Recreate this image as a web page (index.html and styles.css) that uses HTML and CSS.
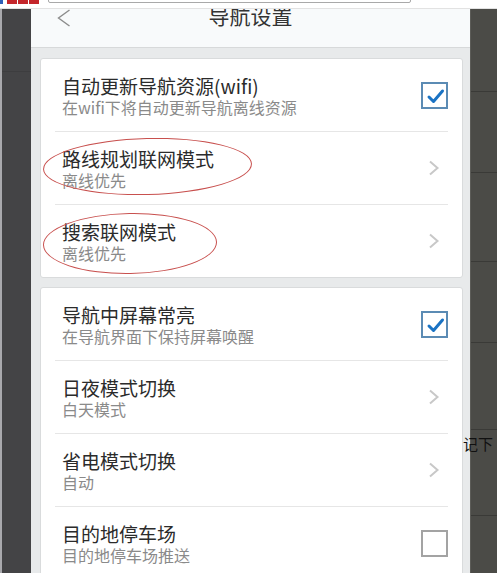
FILE: index.html
```html
<!DOCTYPE html>
<html lang="zh-CN">
<head>
<meta charset="utf-8">
<title>导航设置</title>
<link rel="stylesheet" href="styles.css">
</head>
<body>
<div class="screen">
  <div class="strip-left">
    <div class="lband"></div>
  </div>
  <div class="phone">
    <header class="nav">
      <div class="nav-back">
        <svg width="14" height="18" viewBox="0 0 14 18"><polyline points="12.5,1 1.5,9 12.5,17" fill="none" stroke="#8c8c8c" stroke-width="1.4"/></svg>
      </div>
      <h1 class="nav-title">导航设置</h1>
      <div></div>
    </header>
    <main class="content">
      <section class="card">
        <div class="row">
          <div class="text">
            <div class="title">自动更新导航资源(wifi)</div>
            <div class="sub">在wifi下将自动更新导航离线资源</div>
          </div>
          <svg class="check" width="27" height="27" viewBox="0 0 27 27"><rect x="1" y="1" width="25" height="25" fill="#fff" stroke="#5b8bb4" stroke-width="2"/><path d="M8 15 L12.5 19.5 L21.5 9" fill="none" stroke="#1a73c4" stroke-width="3" stroke-linecap="round" stroke-linejoin="round"/></svg>
        </div>
        <div class="row">
          <div class="text">
            <div class="title">路线规划联网模式</div>
            <div class="sub">离线优先</div>
          </div>
          <div class="arrow"><svg width="12" height="16" viewBox="0 0 12 16"><polyline points="2,1.5 9.5,8 2,14.5" fill="none" stroke="#c8c8c8" stroke-width="2"/></svg></div>
        </div>
        <div class="row">
          <div class="text">
            <div class="title">搜索联网模式</div>
            <div class="sub">离线优先</div>
          </div>
          <div class="arrow"><svg width="12" height="16" viewBox="0 0 12 16"><polyline points="2,1.5 9.5,8 2,14.5" fill="none" stroke="#c8c8c8" stroke-width="2"/></svg></div>
        </div>
      </section>
      <section class="card">
        <div class="row">
          <div class="text">
            <div class="title">导航中屏幕常亮</div>
            <div class="sub">在导航界面下保持屏幕唤醒</div>
          </div>
          <svg class="check" width="27" height="27" viewBox="0 0 27 27"><rect x="1" y="1" width="25" height="25" fill="#fff" stroke="#5b8bb4" stroke-width="2"/><path d="M8 15 L12.5 19.5 L21.5 9" fill="none" stroke="#1a73c4" stroke-width="3" stroke-linecap="round" stroke-linejoin="round"/></svg>
        </div>
        <div class="row">
          <div class="text">
            <div class="title">日夜模式切换</div>
            <div class="sub">白天模式</div>
          </div>
          <div class="arrow"><svg width="12" height="16" viewBox="0 0 12 16"><polyline points="2,1.5 9.5,8 2,14.5" fill="none" stroke="#c8c8c8" stroke-width="2"/></svg></div>
        </div>
        <div class="row">
          <div class="text">
            <div class="title">省电模式切换</div>
            <div class="sub">自动</div>
          </div>
          <div class="arrow"><svg width="12" height="16" viewBox="0 0 12 16"><polyline points="2,1.5 9.5,8 2,14.5" fill="none" stroke="#c8c8c8" stroke-width="2"/></svg></div>
        </div>
        <div class="row">
          <div class="text">
            <div class="title">目的地停车场</div>
            <div class="sub">目的地停车场推送</div>
          </div>
          <svg class="check" width="27" height="27" viewBox="0 0 27 27"><rect x="1" y="1" width="25" height="25" fill="#fff" stroke="#a3a3a3" stroke-width="2"/></svg>
        </div>
      </section>
    </main>
  </div>
  <div class="strip-right">
    <div class="rband rb-92"></div>
    <div class="rband rb-81"></div>
    <div class="rband rb-89"></div>
    <div class="rband rb-81"></div>
    <div class="rband rb-87"></div>
    <div class="rband rb-82 rband-text"><span>记下</span></div>
  </div>
</div>

<div class="browserbar">
  <div class="logo"><span class="lb"></span><span class="lr"></span><span class="lr"></span><span class="lr"></span></div>
  <div class="addr"></div>
</div>

<div class="mark mark-1"></div>
<div class="mark mark-2"></div>
</body>
</html>
```

FILE: styles.css
```css
* { box-sizing: border-box; }
html, body { margin: 0; padding: 0; background: #4a4a47; }
body {
  width: 497px;
  height: 573px;
  overflow: hidden;
  position: relative;
  font-family: "Noto Sans CJK SC", "Noto Sans", sans-serif;
}

.screen {
  display: grid;
  grid-template-columns: 31px 439px 27px;
  width: 497px;
  height: 573px;
  overflow: hidden;
  background: #4a4a47;
}

.strip-left {
  background: #444446;
  border-left: 2px solid #a9a9ad;
}
.lband { height: 72px; border-bottom: 1px solid #3d3d3f; }

.strip-right {
  background: #4b4b47;
  border-left: 1px solid #5c5c58;
}
.rband {
  background: #4b4b47;
  border-bottom: 1px solid #3a3a37;
}
.rb-92 { height: 92px; }
.rb-81 { height: 81px; }
.rb-89 { height: 89px; }
.rb-87 { height: 87px; }
.rb-82 { height: 82px; }
.rband-text span {
  display: block;
  font-size: 15px;
  line-height: 20px;
  color: #111;
  margin: 4px 0 0 -8px;
  white-space: nowrap;
}

.phone {
  background: #e8eaeb;
}

.nav {
  height: 48px;
  background: #f8fafb;
  border-bottom: 1px solid #d7d9da;
  display: grid;
  grid-template-columns: 1fr auto 1fr;
  align-items: start;
}
.nav-back { padding: 9px 0 0 26px; }
.nav-back svg { display: block; }
.nav-title {
  margin: 0;
  padding-top: 2px;
  font-size: 21px;
  line-height: 26px;
  font-weight: 400;
  color: #333;
}

.content {
  padding: 10px 7px 0 9px;
  display: flex;
  flex-direction: column;
  gap: 9px;
}

.card {
  background: #fff;
  border: 1px solid #d9dbdc;
  border-radius: 3px;
}

.row {
  height: 73px;
  margin: 0 14px;
  padding-left: 7px;
  display: flex;
  align-items: center;
  border-bottom: 1px solid #e6e6e6;
}
.row:last-child { border-bottom: 0; height: 72px; }

.text { flex: 1; padding-top: 1px; }
.title {
  font-size: 19px;
  line-height: 23px;
  color: #2b2b2b;
}
.sub {
  font-size: 16px;
  line-height: 20px;
  color: #8a8a8a;
}

.check { display: block; flex: none; }
.arrow {
  width: 27px;
  flex: none;
  display: flex;
  justify-content: flex-start;
  padding-left: 7px;
}
.arrow svg { display: block; }

.browserbar {
  position: absolute;
  left: 0;
  top: 0;
  width: 497px;
  height: 9px;
  background: #fff;
  border-bottom: 1px solid #e2e2e2;
}
.logo {
  position: absolute;
  left: 0;
  top: 0;
  display: flex;
  gap: 1px;
}
.logo .lb { width: 3px; height: 4px; background: #2f5fb8; margin-right: 3px; }
.logo .lr { width: 10px; height: 4px; background: #c4262b; }
.addr {
  position: absolute;
  left: 48px;
  top: -10px;
  width: 363px;
  height: 13px;
  border: 1px solid #a9a9a9;
  border-radius: 2px;
}

.mark {
  position: absolute;
  border: 1.2px solid #c8504e;
  border-radius: 50%;
}
.mark-1 { left: 43px; top: 138px; width: 209px; height: 57px; transform: rotate(-1.5deg); }
.mark-2 { left: 43px; top: 213px; width: 174px; height: 61px; transform: rotate(-1deg); }
```
